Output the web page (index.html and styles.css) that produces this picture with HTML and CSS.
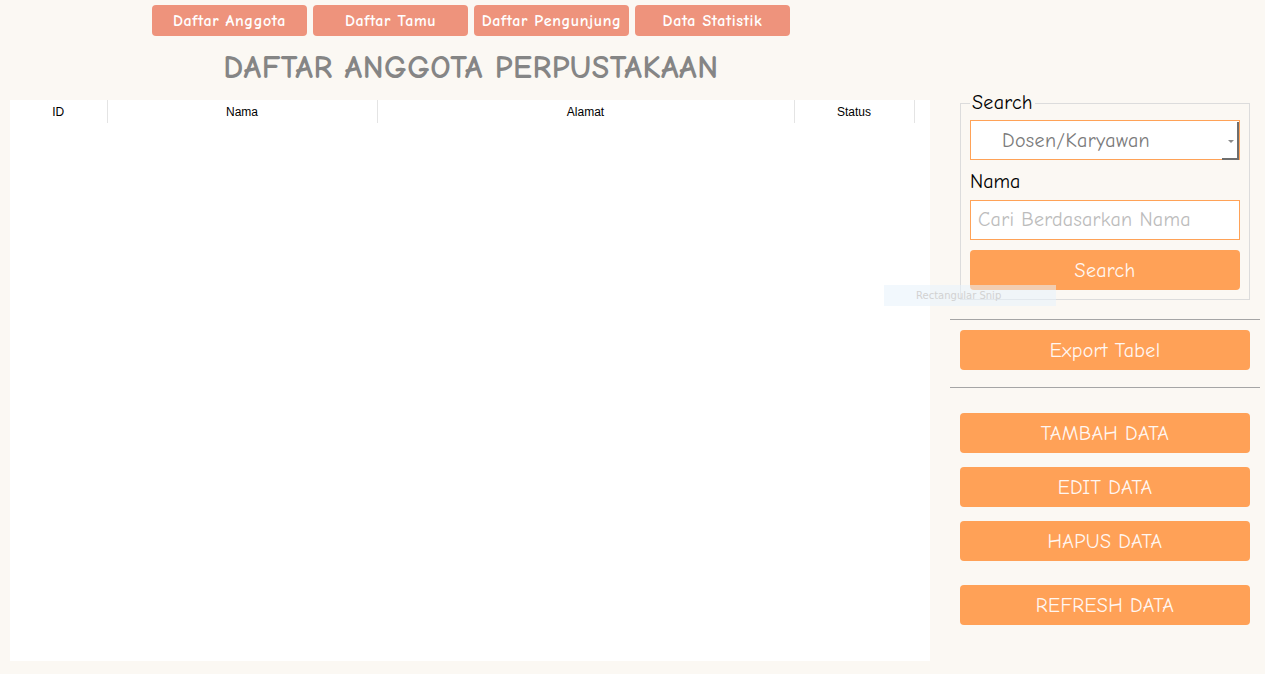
FILE: index.html
```html
<!DOCTYPE html>
<html>
<head>
<meta charset="utf-8">
<link rel="stylesheet" href="styles.css">
</head>
<body>
<div class="app">
  <div class="left">
    <nav class="nav">
      <button class="nav-btn">Daftar Anggota</button>
      <button class="nav-btn">Daftar Tamu</button>
      <button class="nav-btn">Daftar Pengunjung</button>
      <button class="nav-btn">Data Statistik</button>
    </nav>
    <h1 class="title">DAFTAR ANGGOTA PERPUSTAKAAN</h1>
    <div class="table-wrap">
      <table class="grid">
        <colgroup>
          <col class="c-id"><col class="c-nama"><col class="c-alamat"><col class="c-status"><col class="c-fill">
        </colgroup>
        <thead>
          <tr><th>ID</th><th>Nama</th><th>Alamat</th><th>Status</th><th class="fill"></th></tr>
        </thead>
      </table>
    </div>
  </div>
  <aside class="right">
    <fieldset class="search-box">
      <legend>Search</legend>
      <div class="select">
        <span class="select-text">Dosen/Karyawan</span>
        <span class="select-arrow"></span>
      </div>
      <label class="lbl">Nama</label>
      <div class="input">Cari Berdasarkan Nama</div>
      <button class="btn">Search</button>
    </fieldset>
    <div class="sep sep1"></div>
    <button class="btn wide">Export Tabel</button>
    <div class="sep sep2"></div>
    <div class="actions">
      <button class="btn wide">TAMBAH DATA</button>
      <button class="btn wide">EDIT DATA</button>
      <button class="btn wide">HAPUS DATA</button>
      <button class="btn wide refresh">REFRESH DATA</button>
    </div>
  </aside>
  <div class="snip">Rectangular Snip</div>
</div>
</body>
</html>
```
FILE: styles.css
```css
html, body {
  margin: 0;
  padding: 0;
  background: #fbf8f3;
}
body {
  width: 1265px;
  height: 674px;
  overflow: hidden;
  font-family: "Comic Sans MS", "Comic Neue", "DejaVu Sans", sans-serif;
}
.app {
  position: relative;
  display: flex;
  height: 674px;
}
.left {
  width: 920px;
  margin-left: 10px;
  display: flex;
  flex-direction: column;
}
.nav {
  display: flex;
  justify-content: center;
  gap: 6px;
  margin-top: 5px;
  padding-left: 2px;
}
.nav-btn {
  width: 155px;
  height: 31px;
  border: none;
  border-radius: 4px;
  background: #ee937c;
  color: #fff;
  font-family: inherit;
  font-weight: bold;
  font-size: 16px;
  letter-spacing: 0.6px;
  padding: 1px 0 0;
}
.title {
  margin: 13px 0 0;
  height: 51px;
  text-align: center;
  font-size: 32px;
  font-weight: bold;
  color: #858585;
  letter-spacing: 0.5px;
  line-height: 38px;
  padding-left: 2px;
}
.table-wrap {
  background: #fff;
  height: 561px;
}
.grid {
  width: 920px;
  border-collapse: collapse;
  table-layout: fixed;
}
.c-id { width: 97px; }
.c-nama { width: 270px; }
.c-alamat { width: 417px; }
.c-status { width: 120px; }
.grid th {
  height: 23px;
  padding: 0;
  font-family: "Liberation Sans", Arial, sans-serif;
  font-weight: normal;
  font-size: 12px;
  color: #000;
  border-right: 1px solid #e4e4e4;
  text-align: center;
}
.grid th.fill { border-right: none; }
.right {
  width: 310px;
  margin-left: 20px;
  display: flex;
  flex-direction: column;
  padding-top: 92px;
}
.search-box {
  margin: 0 0 0 10px;
  width: 290px;
  box-sizing: border-box;
  border: 1px solid #dcdcdc;
  padding: 6px 9px 9px;
}
.search-box legend {
  font-size: 20px;
  color: #000;
  padding: 0 2px;
  margin-left: 0;
  line-height: 22px;
  letter-spacing: 0.3px;
}
.select {
  position: relative;
  height: 40px;
  box-sizing: border-box;
  border: 1px solid #ffa257;
  background: #fff;
  display: flex;
  align-items: center;
  padding-left: 31px;
}
.select-text {
  font-size: 20px;
  color: #7a7a7a;
  letter-spacing: 0.4px;
}
.select-arrow {
  position: absolute;
  right: 0;
  top: 1px;
  width: 15px;
  height: 37px;
  border-right: 2px solid #6e6e6e;
}
.select-arrow::before {
  content: "";
  position: absolute;
  right: 3px;
  top: 18px;
  border-left: 3px solid transparent;
  border-right: 3px solid transparent;
  border-top: 3px solid #8a8a8a;
}
.select-arrow::after {
  content: "";
  position: absolute;
  right: -2px;
  bottom: -1px;
  width: 17px;
  height: 2px;
  background: #6e6e6e;
}
.lbl {
  display: block;
  font-size: 20px;
  color: #000;
  margin-top: 10px;
  line-height: 24px;
  height: 30px;
}
.input {
  height: 40px;
  box-sizing: border-box;
  border: 1px solid #ffa257;
  background: #fff;
  font-size: 20px;
  color: #bcbcbc;
  padding-left: 7px;
  line-height: 38px;
  letter-spacing: 0.3px;
}
.btn {
  display: block;
  width: 270px;
  height: 40px;
  border: none;
  border-radius: 4px;
  background: #ffa157;
  color: #fff7f2;
  font-family: inherit;
  font-size: 20px;
  letter-spacing: 0.3px;
  padding: 0;
  margin-top: 10px;
}
.btn.wide {
  width: 290px;
  margin: 0 0 0 10px;
}
.sep {
  height: 1px;
  background: #a5a5a5;
  width: 310px;
}
.sep1 { margin: 19px 0 10px; }
.sep2 { margin: 17px 0 25px; }
.actions {
  display: flex;
  flex-direction: column;
  gap: 14px;
}
.actions .refresh { margin-top: 10px; }
.snip {
  position: absolute;
  left: 884px;
  top: 285px;
  width: 172px;
  height: 21px;
  box-sizing: border-box;
  padding-left: 32px;
  background: rgba(232, 242, 252, 0.55);
  color: #d2d2d2;
  font-family: "DejaVu Sans", sans-serif;
  font-size: 10px;
  line-height: 21px;
}
```
